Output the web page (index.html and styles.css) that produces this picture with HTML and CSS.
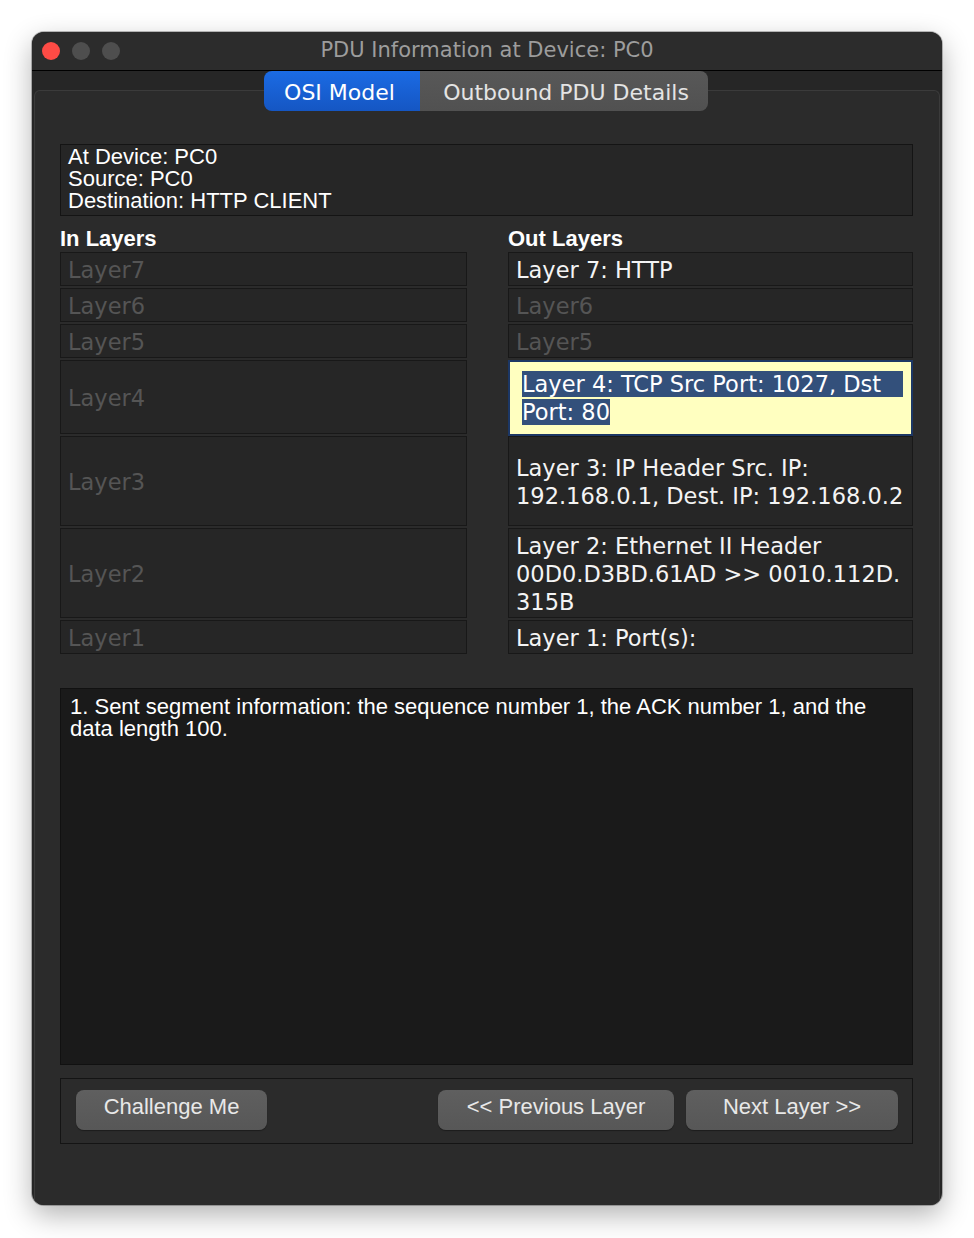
FILE: index.html
```html
<!DOCTYPE html>
<html lang="en">
<head>
<meta charset="utf-8">
<title>PDU Information at Device: PC0</title>
<link rel="stylesheet" href="styles.css">
</head>
<body>
<div class="window">
  <div class="titlebar">
    <div class="lights">
      <span class="light red"></span>
      <span class="light gray"></span>
      <span class="light gray"></span>
    </div>
    <div class="title">PDU Information at Device: PC0</div>
    <div></div>
  </div>
  <div class="content">
    <div class="tabs">
      <div class="tab active">OSI Model</div>
      <div class="tab">Outbound PDU Details</div>
    </div>
    <div class="panel">
      <div class="info">
        <div>At Device: PC0</div>
        <div>Source: PC0</div>
        <div>Destination: HTTP CLIENT</div>
      </div>
      <div class="layers">
        <div class="head">In Layers</div>
        <div class="head">Out Layers</div>

        <div class="cell off">Layer7</div>
        <div class="cell on">Layer 7: HTTP</div>

        <div class="cell off">Layer6</div>
        <div class="cell off">Layer6</div>

        <div class="cell off">Layer5</div>
        <div class="cell off">Layer5</div>

        <div class="cell off">Layer4</div>
        <div class="cell hl"><div><span class="sel first">Layer 4: TCP Src Port: 1027, Dst</span><br><span class="sel">Port: 80</span></div></div>

        <div class="cell off">Layer3</div>
        <div class="cell on"><div>Layer 3: IP Header Src. IP:<br>192.168.0.1, Dest. IP: 192.168.0.2</div></div>

        <div class="cell off">Layer2</div>
        <div class="cell on"><div>Layer 2: Ethernet II Header<br>00D0.D3BD.61AD &gt;&gt; 0010.112D.<br>315B</div></div>

        <div class="cell off">Layer1</div>
        <div class="cell on">Layer 1: Port(s):</div>
      </div>
      <div class="desc">1. Sent segment information: the sequence number 1, the ACK number 1, and the<br>data length 100.</div>
      <div class="buttons">
        <button class="btn challenge">Challenge Me</button>
        <div class="spacer"></div>
        <button class="btn prev">&lt;&lt; Previous Layer</button>
        <button class="btn next">Next Layer &gt;&gt;</button>
      </div>
    </div>
  </div>
</div>
</body>
</html>
```
FILE: styles.css
```css
html, body {
  margin: 0;
  padding: 0;
  background: #ffffff;
}

body {
  width: 974px;
  height: 1238px;
  overflow: hidden;
}

.window {
  margin: 32px 0 0 32px;
  width: 910px;
  height: 1173px;
  border-radius: 12px;
  overflow: hidden;
  background: #262626;
  display: flex;
  flex-direction: column;
  box-shadow: 0 0 0 1px rgba(0, 0, 0, 0.25), 0 10px 28px rgba(0, 0, 0, 0.3);
}

.titlebar {
  height: 38px;
  flex: none;
  background: #2c2c2c;
  border-bottom: 1px solid #000;
  display: grid;
  grid-template-columns: 1fr auto 1fr;
  align-items: center;
}

.lights {
  display: flex;
  gap: 12px;
  padding-left: 10px;
}

.light {
  width: 18px;
  height: 18px;
  border-radius: 50%;
  display: block;
}

.light.red { background: #fe4b45; }
.light.gray { background: #4e4e4e; }

.title {
  font-family: "DejaVu Sans", sans-serif;
  font-size: 21px;
  color: #9d9d9d;
  white-space: nowrap;
  padding-bottom: 3px;
}

.content {
  flex: 1;
  display: flex;
  flex-direction: column;
  padding: 0 2px;
}

.tabs {
  align-self: center;
  position: relative;
  z-index: 1;
  display: flex;
  height: 40px;
  border-radius: 8px;
  overflow: hidden;
  font-family: "DejaVu Sans", sans-serif;
  font-size: 22px;
  margin-left: -2px;
}

.tab {
  display: flex;
  align-items: center;
  justify-content: center;
  background: linear-gradient(#585858, #515151);
  color: #e4e4e4;
  width: 288px;
  padding-top: 3px;
  box-sizing: border-box;
  padding-left: 4px;
}

.tab.active {
  width: 156px;
  background: linear-gradient(#1b6be4, #1556c3);
  color: #ffffff;
  padding-left: 0;
  padding-right: 5px;
}

.panel {
  flex: 1;
  margin-top: -21px;
  background: #2b2b2b;
  border: 1px solid #3b3b3b;
  border-bottom: none;
  border-radius: 6px 6px 0 0;
  padding: 53px 0 0 25px;
}

.info {
  width: 853px;
  box-sizing: border-box;
  border: 1px solid #141414;
  background: #262626;
  padding: 1px 7px 3px 7px;
  font-family: "Liberation Sans", Arial, sans-serif;
  font-size: 22px;
  line-height: 22px;
  color: #ffffff;
}

.layers {
  margin-top: 12px;
  display: grid;
  grid-template-columns: 407px 405px;
  column-gap: 41px;
  grid-template-rows: 22px 34px 34px 34px 74px 90px 90px 34px;
  row-gap: 2px;
}

.head {
  font-family: "Liberation Sans", Arial, sans-serif;
  font-weight: bold;
  font-size: 22px;
  line-height: 22px;
  color: #ffffff;
}

.cell {
  box-sizing: border-box;
  border: 1px solid #181818;
  background: #262626;
  padding: 1px 0 0 7px;
  display: flex;
  align-items: center;
  font-family: "DejaVu Sans", sans-serif;
  font-size: 22.5px;
  line-height: 28px;
  white-space: nowrap;
}

.cell.off { color: #555555; }
.cell.on { color: #f4f4f4; }

.cell.hl {
  border: 2px solid #1c3765;
  background: #ffffc0;
  padding: 0 0 0 12px;
  height: 76px;
}

.sel {
  background: #33507b;
  color: #ffffff;
}

.sel.first {
  padding-right: 22px;
}

.desc {
  margin-top: 34px;
  width: 853px;
  height: 377px;
  box-sizing: border-box;
  border: 1px solid #111111;
  background: #1a1a1a;
  padding: 7px 9px;
  font-family: "Liberation Sans", Arial, sans-serif;
  font-size: 22px;
  line-height: 22px;
  color: #ffffff;
}

.buttons {
  margin-top: 13px;
  width: 853px;
  height: 66px;
  box-sizing: border-box;
  border: 1px solid #141414;
  background: #2b2b2b;
  display: flex;
  align-items: center;
  padding: 0 14px 2px 15px;
  gap: 12px;
}

.spacer { flex: 1; }

.btn {
  height: 40px;
  border: none;
  border-radius: 8px;
  background: linear-gradient(#5f5f5f, #575757);
  box-shadow: 0 1px 1px rgba(0, 0, 0, 0.35);
  color: #e8e8e8;
  font-family: "Liberation Sans", Arial, sans-serif;
  font-size: 22px;
  padding: 0 0 7px 0;
  display: flex;
  align-items: center;
  justify-content: center;
}

.btn.challenge { width: 191px; }
.btn.prev { width: 236px; }
.btn.next { width: 212px; }
```
